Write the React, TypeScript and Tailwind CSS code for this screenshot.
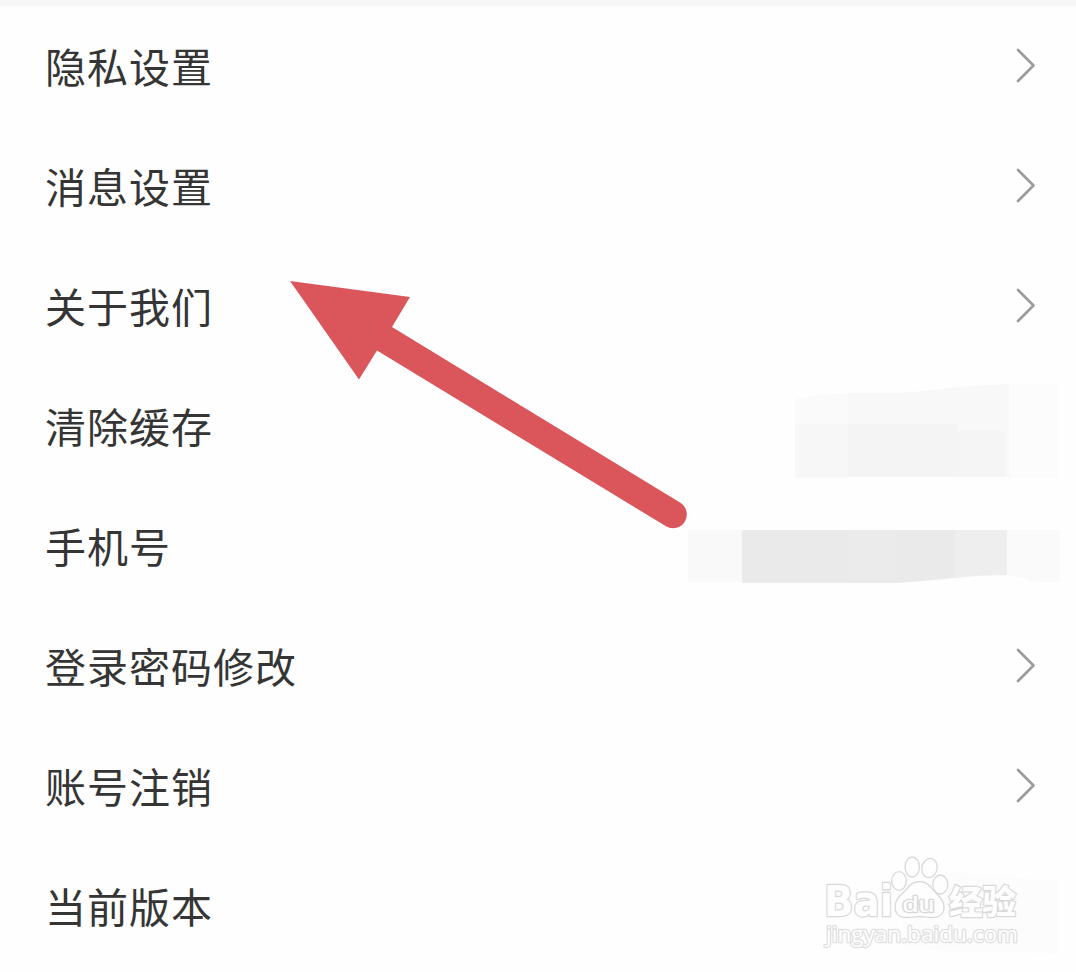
import React from 'react';

interface SettingItem {
  id: string;
  label: string;
  hasArrow: boolean;
}

const settingItems: SettingItem[] = [
  { id: 'privacy', label: '隐私设置', hasArrow: true },
  { id: 'message', label: '消息设置', hasArrow: true },
  { id: 'about', label: '关于我们', hasArrow: true },
  { id: 'cache', label: '清除缓存', hasArrow: false },
  { id: 'phone', label: '手机号', hasArrow: false },
  { id: 'password', label: '登录密码修改', hasArrow: true },
  { id: 'cancel', label: '账号注销', hasArrow: true },
  { id: 'version', label: '当前版本', hasArrow: false }
];

const Chevron: React.FC = () => (
  <svg width="22" height="36" viewBox="0 0 22 36" fill="none" className="shrink-0">
    <path d="M3 2 L18.5 17.5 L3 33" stroke="#9a9a9a" strokeWidth="2.6" strokeLinecap="round" strokeLinejoin="round" />
  </svg>
);

// Blocks that hide the cache size, the phone number and the version
const Mosaic: React.FC = () => (
  <svg width="406" height="602" viewBox="670 370 406 602" className="pointer-events-none absolute right-0 top-[370px]">
    <path d="M1009 384 L1058 384 V478 H1009 Z" fill="#fcfcfc" />
    <path d="M795 400 Q800 396 848 393 V478 H795 Z" fill="#fafafa" />
    <path d="M848 393 L898 393 Q925 391 958 387 L1009 384 V477 H848 Z" fill="#f8f8f8" />
    <path d="M795 424 H848 V477 H795 Z" fill="#f7f7f7" />
    <path d="M848 424 H958 V477 H848 Z" fill="#f4f4f4" />
    <path d="M958 431 H1005 V477 H958 Z" fill="#f5f5f5" />
    <path d="M688 530 H742 V582 H688 Z" fill="#f9f9f9" />
    <path d="M742 530 H848 V583 H742 Z" fill="#eaeaea" />
    <path d="M848 530 H897 V583 H848 Z" fill="#ebebeb" />
    <path d="M897 530 H955 V578 Q925 581 897 583 Z" fill="#eaeaea" />
    <path d="M955 530 H1007 V575 Q980 575 955 578 Z" fill="#eeeeee" />
    <path d="M1007 530 H1060 V582 H1035 Q1022 577 1007 575 Z" fill="#fafafa" />
    <path d="M943 872 L1058 881 V954 L903 949 V918 H943 Z" fill="#fcfcfc" />
  </svg>
);

const PointerArrow: React.FC = () => (
  <svg width="400" height="252" viewBox="289 279 400 252" className="pointer-events-none absolute left-[289px] top-[279px]">
    <path d="M290 281 L410 297 L392 327 L680 502.5 A13.7 13.7 0 0 1 666 526.3 L377 350.5 L359 379.5 Z" fill="#db565b" />
  </svg>
);

const Watermark: React.FC = () => (
  <svg width="204" height="104" viewBox="820 850 204 104" className="pointer-events-none absolute left-[820px] top-[850px]">
    <g fill="#fefefe" stroke="#d9d9d9" strokeWidth="1.3" strokeLinejoin="round">
      <text x="824" y="916" fontSize="42" fontWeight="700" strokeWidth="2.6" paintOrder="stroke" textLength="69" lengthAdjust="spacingAndGlyphs" fontFamily="'DejaVu Sans', sans-serif">Bai</text>
      <ellipse cx="899" cy="881" rx="7.3" ry="9.3" />
      <ellipse cx="912.2" cy="867" rx="7.2" ry="10" />
      <ellipse cx="929.5" cy="868" rx="7.6" ry="9.7" transform="rotate(12 929.5 868)" />
      <ellipse cx="940.3" cy="884.5" rx="7.5" ry="9.5" />
      <path d="M919.5 881.5 C925 881.5 928.5 884 931.5 888 C935 893 944 898 944 907 C944 914 939 917.5 932 917.5 C926 917.5 923 916.5 919.5 916.5 C916 916.5 913 917.5 907 917.5 C900 917.5 895 914 895 907 C895 898 903.5 893 907.5 888 C910.5 884 914 881.5 919.5 881.5 Z" />
      <text x="902.5" y="911.5" fontSize="22" fontWeight="400" strokeWidth="2.6" paintOrder="stroke" textLength="32" lengthAdjust="spacingAndGlyphs" fontFamily="'Liberation Sans', sans-serif">du</text>
      <text x="949" y="913.5" fontSize="33" fontWeight="900" strokeWidth="2.4" paintOrder="stroke" textLength="67" lengthAdjust="spacingAndGlyphs" fontFamily="'Noto Sans CJK SC', sans-serif">经验</text>
      <text x="826" y="942" fontSize="22" strokeWidth="2.6" paintOrder="stroke" stroke="#e0e0e0" textLength="192" lengthAdjust="spacingAndGlyphs" fontFamily="'Open Sans', sans-serif">jingyan.baidu.com</text>
    </g>
  </svg>
);

const App: React.FC = () => {
  return (
    <div className="relative h-[972px] w-[1076px] overflow-hidden bg-[#fefefe] font-['Noto_Sans_CJK_SC',sans-serif]">
      <div className="h-[6px] bg-[#f6f6f6]"></div>

      <ul>
        {settingItems.map((item) => (
          <li key={item.id} className="flex h-[120px] items-center justify-between pl-[45px] pr-[39px]">
            <span className="pb-[2px] text-[41px] leading-[60px] tracking-[1px] text-[#353535]">{item.label}</span>
            {item.hasArrow && <Chevron />}
          </li>
        ))}
      </ul>

      <Mosaic />
      <PointerArrow />
      <Watermark />
    </div>
  );
};

export default App;
